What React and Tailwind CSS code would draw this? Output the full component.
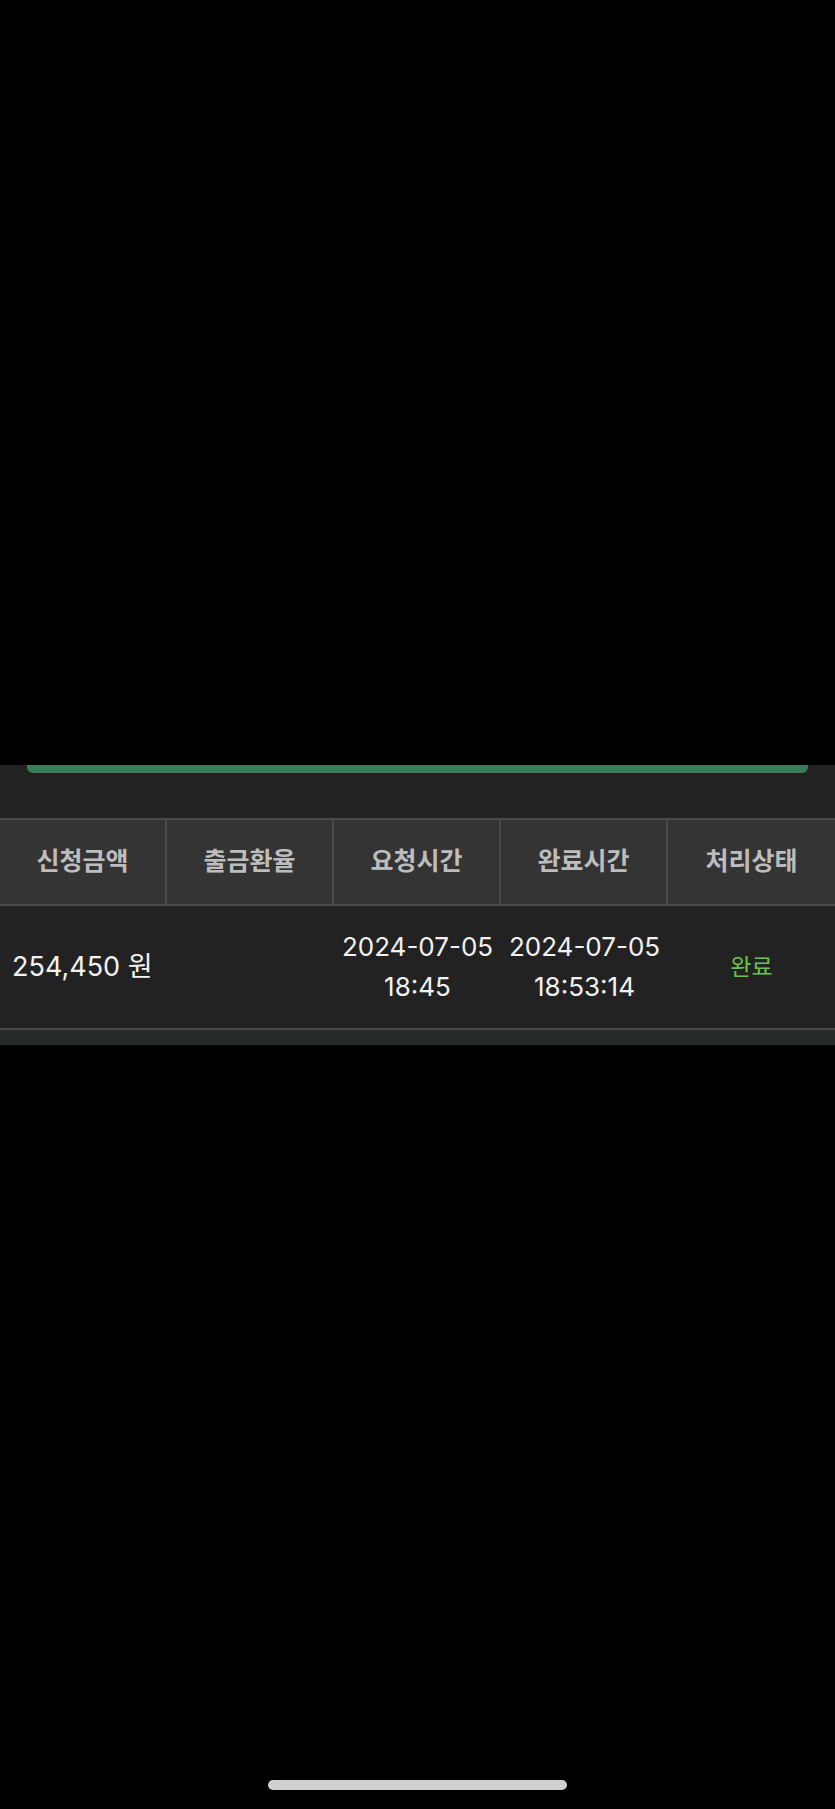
import React from 'react';

const headers = ['신청금액', '출금환율', '요청시간', '완료시간', '처리상태'];

const App = () => {
    return (
        <div className="w-[835px] h-[1809px] bg-black flex flex-col" style={{ fontFamily: 'Inter, "Noto Sans CJK KR", sans-serif' }}>
            <div className="h-[765px] shrink-0" />

            <div className="bg-[#222222] shrink-0">
                <div className="ml-[27px] w-[781px] h-[8px] bg-[#3a7b5b] rounded-b-[6px]" />
                <div className="h-[45px]" />

                <div className="grid grid-cols-5 h-[88px] bg-[#343434] border-y-2 border-[#4a4a4a]">
                    {headers.map((h, i) => (
                        <div
                            key={h}
                            className={`flex items-center justify-center text-[25px] font-bold text-[#bdbdbd] ${i < 4 ? 'border-r-2 border-[#4a4a4a]' : ''}`}
                        >
                            {h}
                        </div>
                    ))}
                </div>

                <div className="grid grid-cols-5 h-[124px] border-b-2 border-[#4a4a4a] text-[#f2f2f2]">
                    <div className="flex items-center pl-[12px] text-[27px]">254,450 원</div>
                    <div />
                    <div className="flex flex-col items-center justify-center text-[26px] leading-[40px]">
                        <span>2024-07-05</span>
                        <span>18:45</span>
                    </div>
                    <div className="flex flex-col items-center justify-center text-[26px] leading-[40px]">
                        <span>2024-07-05</span>
                        <span>18:53:14</span>
                    </div>
                    <div className="flex items-center justify-center text-[23px] text-[#6cc24a]">완료</div>
                </div>

                <div className="h-[15px] bg-[#252b28]" />
            </div>

            <div className="flex-1" />
            <div className="flex justify-center pb-[19px]">
                <div className="w-[299px] h-[10px] rounded-full bg-[#cfcfcf]" />
            </div>
        </div>
    );
};

export default App;
